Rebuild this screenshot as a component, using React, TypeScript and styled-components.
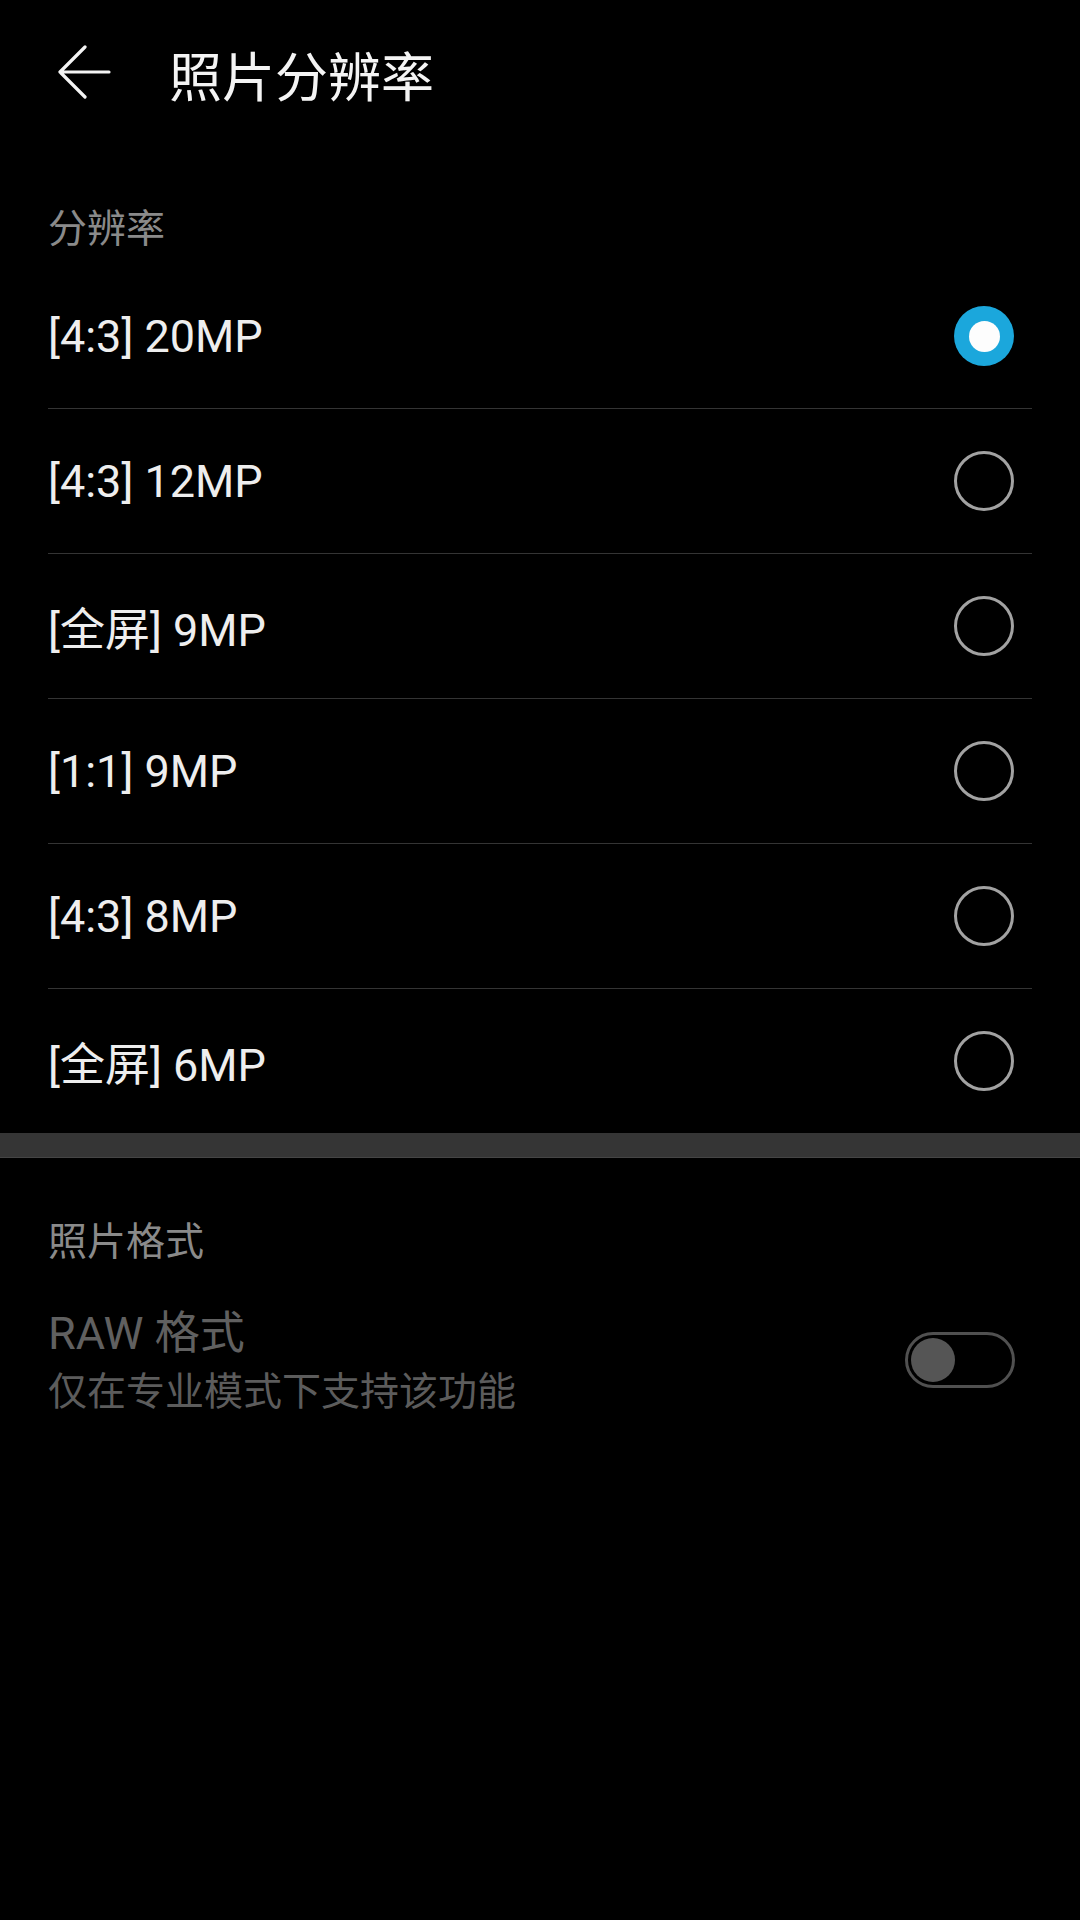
import { type FC } from "react";
import styled, { createGlobalStyle } from "styled-components";

const resolutions = [
  { label: "[4:3] 20MP", selected: true },
  { label: "[4:3] 12MP", selected: false },
  { label: "[全屏] 9MP", selected: false },
  { label: "[1:1] 9MP", selected: false },
  { label: "[4:3] 8MP", selected: false },
  { label: "[全屏] 6MP", selected: false },
];

const GlobalStyle = createGlobalStyle`
  html, body {
    margin: 0;
    padding: 0;
    background: #000;
  }
  body {
    font-family: Roboto, "Noto Sans CJK SC", sans-serif;
    color: #fff;
  }
`;

const Screen = styled.div`
  width: 1080px;
  min-height: 1920px;
  background: #000;
  display: flex;
  flex-direction: column;
`;

const Header = styled.header`
  height: 144px;
  display: flex;
  align-items: center;
  padding-left: 57px;
`;

const BackButton = styled.div`
  width: 54px;
  height: 54px;
  display: flex;
  align-items: center;
  justify-content: center;
`;

const Title = styled.h1`
  margin: 4px 0 0 58px;
  font-family: "Noto Sans CJK SC", sans-serif;
  font-size: 53px;
  font-weight: 400;
  line-height: 60px;
  color: #f4f4f4;
`;

const Section = styled.section`
  padding: 0 48px;
  display: flex;
  flex-direction: column;
`;

const SectionLabel = styled.div<{ $top: number; $bottom: number }>`
  padding-top: ${({ $top }) => $top}px;
  padding-bottom: ${({ $bottom }) => $bottom}px;
  font-family: "Noto Sans CJK SC", sans-serif;
  font-size: 39px;
  line-height: 48px;
  color: #8a8a8a;
`;

const OptionRow = styled.div`
  height: 144px;
  display: flex;
  align-items: center;
  justify-content: space-between;
  border-bottom: 1px solid #343434;
  &:last-child {
    border-bottom: none;
  }
`;

const OptionText = styled.span`
  font-size: 45px;
  color: #eeeeee;
`;

const Radio = styled.span<{ $checked: boolean }>`
  width: 60px;
  height: 60px;
  box-sizing: border-box;
  margin-right: 18px;
  border-radius: 50%;
  display: flex;
  align-items: center;
  justify-content: center;
  border: ${({ $checked }) => ($checked ? "none" : "3px solid #a2a2a2")};
  background: ${({ $checked }) => ($checked ? "#1ba7dc" : "transparent")};
  &::after {
    content: "";
    display: ${({ $checked }) => ($checked ? "block" : "none")};
    width: 31px;
    height: 31px;
    border-radius: 50%;
    background: #fdfdfd;
  }
`;

const Spacer = styled.div`
  height: 24px;
  background: #353535;
  border-bottom: 1px solid #454545;
`;

const SwitchRow = styled.div`
  display: flex;
  align-items: center;
  justify-content: space-between;
  padding-top: 44px;
`;

const SwitchText = styled.div`
  display: flex;
  flex-direction: column;
`;

const SwitchTitle = styled.span`
  font-size: 45px;
  line-height: 56px;
  color: #606060;
`;

const SwitchHint = styled.span`
  font-family: "Noto Sans CJK SC", sans-serif;
  font-size: 39px;
  line-height: 52px;
  color: #5c5c5c;
`;

const Toggle = styled.span`
  width: 110px;
  height: 56px;
  margin-right: 17px;
  box-sizing: border-box;
  border: 3px solid #505050;
  border-radius: 28px;
  display: flex;
  align-items: center;
  padding-left: 3px;
  &::before {
    content: "";
    width: 44px;
    height: 44px;
    border-radius: 50%;
    background: #555555;
  }
`;

const BackArrow: FC = () => (
  <svg width="54" height="54" viewBox="0 0 54 54" fill="none">
    <path
      d="M3 27H52M28 2L3 27L28 52"
      stroke="#f4f4f4"
      strokeWidth="3.2"
      strokeLinecap="round"
      strokeLinejoin="round"
    />
  </svg>
);

const App: FC = () => {
  return (
    <Screen>
      <GlobalStyle />
      <Header>
        <BackButton>
          <BackArrow />
        </BackButton>
        <Title>照片分辨率</Title>
      </Header>

      <Section>
        <SectionLabel $top={57} $bottom={15}>
          分辨率
        </SectionLabel>
        {resolutions.map((item) => (
          <OptionRow key={item.label}>
            <OptionText>{item.label}</OptionText>
            <Radio $checked={item.selected} />
          </OptionRow>
        ))}
      </Section>

      <Spacer />

      <Section>
        <SectionLabel $top={56} $bottom={0}>
          照片格式
        </SectionLabel>
        <SwitchRow>
          <SwitchText>
            <SwitchTitle>RAW 格式</SwitchTitle>
            <SwitchHint>仅在专业模式下支持该功能</SwitchHint>
          </SwitchText>
          <Toggle />
        </SwitchRow>
      </Section>
    </Screen>
  );
};

export default App;
